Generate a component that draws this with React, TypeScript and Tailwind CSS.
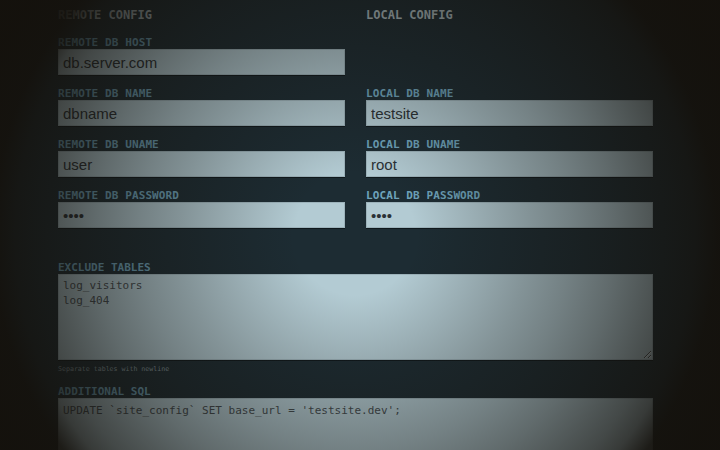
import React from "react";

const mono = "font-['DejaVu_Sans_Mono','Liberation_Mono',monospace]";

function Field({ label, value, type = "text" }: { label: string; value: string; type?: string }) {
  return (
    <div className="mb-[12px]">
      <div className={`${mono} font-bold text-[11px] leading-[13px] text-[#6ea3bb] tracking-[0.1px]`}>{label}</div>
      <input
        type={type}
        readOnly
        defaultValue={value}
        className="block w-full h-[26px] bg-[#b3cbd3] border border-[#9db3bb] shadow-[0_1px_0_rgba(0,0,0,0.45)] px-[4px] text-[15px] text-[#2b3236] font-['Liberation_Sans',Arial,sans-serif] outline-none"
      />
    </div>
  );
}

export default function App() {
  return (
    <div className="relative w-[720px] h-[450px] overflow-hidden bg-[#1d2c33]">
      <div className="ml-[58px] w-[595px] pt-[7px]">
        <div className="grid grid-cols-2 gap-x-[21px]">
          <div>
            <div className={`${mono} font-bold text-[12px] leading-[16px] text-[#b2c2c7] mb-[13px]`}>REMOTE CONFIG</div>
            <Field label="REMOTE DB HOST" value="db.server.com" />
            <Field label="REMOTE DB NAME" value="dbname" />
            <Field label="REMOTE DB UNAME" value="user" />
            <Field label="REMOTE DB PASSWORD" value="test" type="password" />
          </div>
          <div>
            <div className={`${mono} font-bold text-[12px] leading-[16px] text-[#b2c2c7] mb-[13px]`}>LOCAL CONFIG</div>
            <div className="h-[51px]" />
            <Field label="LOCAL DB NAME" value="testsite" />
            <Field label="LOCAL DB UNAME" value="root" />
            <Field label="LOCAL DB PASSWORD" value="test" type="password" />
          </div>
        </div>
        <div className="mt-[21px]">
          <div className={`${mono} font-bold text-[11px] leading-[13px] text-[#6ea3bb]`}>EXCLUDE TABLES</div>
          <textarea
            readOnly
            defaultValue={"log_visitors\nlog_404"}
            className={`${mono} block w-full h-[86px] bg-[#b3cbd3] border border-[#9db3bb] shadow-[0_1px_0_rgba(0,0,0,0.45)] px-[4px] pt-[3px] text-[11px] leading-[15px] text-[#434c50] outline-none`}
          />
          <div className={`${mono} text-[6.6px] leading-[8px] text-[#8a9ca2] mt-[5px]`}>Separate tables with newline</div>
        </div>
        <div className="mt-[12px]">
          <div className={`${mono} font-bold text-[11px] leading-[13px] text-[#6ea3bb]`}>ADDITIONAL SQL</div>
          <textarea
            readOnly
            defaultValue={"UPDATE `site_config` SET base_url = 'testsite.dev';"}
            className={`${mono} block w-full h-[86px] bg-[#b3cbd3] border border-[#9db3bb] px-[4px] pt-[4px] text-[11px] leading-[15px] text-[#434c50] outline-none`}
          />
        </div>
      </div>
      <div className="pointer-events-none absolute inset-0 bg-[radial-gradient(circle_at_355px_235px,rgba(20,17,12,0)_60px,rgba(20,17,12,0.3)_175px,rgba(20,17,12,0.4)_215px,rgba(20,17,12,0.52)_260px,rgba(20,17,12,0.7)_320px,rgba(20,17,12,0.78)_340px,rgba(20,17,12,0.94)_362px,rgba(20,17,12,0.98)_400px)]" />
    </div>
  );
}
